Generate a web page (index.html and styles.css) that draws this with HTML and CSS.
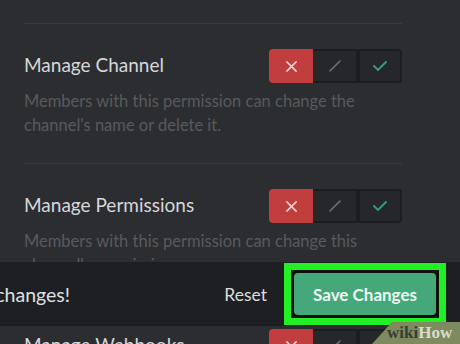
FILE: index.html
```html
<!DOCTYPE html>
<html lang="en">
<head>
  <meta charset="UTF-8">
  <meta name="viewport" content="width=device-width, initial-scale=1.0">
  <title>Channel Permissions</title>
  <link rel="stylesheet" href="styles.css">
</head>
<body>
  <main class="permissions">
    <div class="perm">
      <div class="perm-row">
        <span class="perm-title">Manage Channel</span>
        <div class="toggle">
          <span class="seg seg-deny"><svg viewBox="0 0 14 14"><path d="M2 2L12 12M12 2L2 12"/></svg></span>
          <span class="seg seg-neutral"><svg viewBox="0 0 14 14"><path d="M2 12L12 2"/></svg></span>
          <span class="seg seg-allow"><svg viewBox="0 0 14 14"><path d="M1 7L5 11L13 3"/></svg></span>
        </div>
      </div>
      <p class="perm-desc">Members with this permission can change the channel's name or delete it.</p>
    </div>

    <div class="perm">
      <div class="perm-row">
        <span class="perm-title">Manage Permissions</span>
        <div class="toggle">
          <span class="seg seg-deny"><svg viewBox="0 0 14 14"><path d="M2 2L12 12M12 2L2 12"/></svg></span>
          <span class="seg seg-neutral"><svg viewBox="0 0 14 14"><path d="M2 12L12 2"/></svg></span>
          <span class="seg seg-allow"><svg viewBox="0 0 14 14"><path d="M1 7L5 11L13 3"/></svg></span>
        </div>
      </div>
      <p class="perm-desc">Members with this permission can change this channel's permissions.</p>
    </div>

    <div class="perm">
      <div class="perm-row">
        <span class="perm-title">Manage Webhooks</span>
        <div class="toggle">
          <span class="seg seg-deny"><svg viewBox="0 0 14 14"><path d="M2 2L12 12M12 2L2 12"/></svg></span>
          <span class="seg seg-neutral"><svg viewBox="0 0 14 14"><path d="M2 12L12 2"/></svg></span>
          <span class="seg seg-allow"><svg viewBox="0 0 14 14"><path d="M1 7L5 11L13 3"/></svg></span>
        </div>
      </div>
      <p class="perm-desc">Members with this permission can create, edit and delete webhooks.</p>
    </div>
  </main>

  <div class="notice">
    <div class="notice-msg"><span>Careful — you have unsaved changes!</span></div>
    <button type="button" class="btn-reset">Reset</button>
    <div class="highlight">
      <button type="button" class="btn-save">Save Changes</button>
    </div>
  </div>

  <div class="watermark"><span class="wm-wiki">wiki</span><span class="wm-how">How</span></div>
</body>
</html>
```

FILE: styles.css
```css
body {
  margin: 0;
  width: 460px;
  height: 344px;
  overflow: hidden;
  position: relative;
  background-color: #2c2d31;
  font-family: Lato, "Open Sans", sans-serif;
}
.permissions {
  padding: 23px 58px 0 24px;
}
.perm {
  border-top: 1px solid #393a3f;
  padding-top: 25px;
  padding-bottom: 26px;
}
.perm-row {
  display: flex;
  align-items: center;
  justify-content: space-between;
}
.perm-title {
  color: #d6d7d9;
  font-size: 19px;
  margin-top: -4px;
}
.perm-desc {
  margin: 6px 0 0;
  color: #585a5e;
  font-size: 16.5px;
  line-height: 24px;
  width: 350px;
}
.toggle {
  display: flex;
  height: 34px;
  border-radius: 4px;
  background-color: #26272b;
}
.seg {
  width: 44px;
  display: flex;
  align-items: center;
  justify-content: center;
  box-sizing: border-box;
  border: 2px solid #1c1d20;
}
.seg svg {
  width: 14px;
  height: 14px;
  fill: none;
  stroke-width: 1.6;
  stroke-linecap: round;
}
.seg-deny {
  background-color: #c23d3d;
  border-color: #c23d3d;
  border-radius: 4px 0 0 4px;
}
.seg-deny svg {
  stroke: #f3d6d6;
  width: 13px;
  height: 13px;
}
.seg-neutral {
  width: 45px;
  border-left: none;
}
.seg-neutral svg {
  stroke: #6e7074;
}
.seg-allow {
  border-left-width: 2px;
  border-radius: 0 4px 4px 0;
}
.seg-allow svg {
  stroke: #3b9e7c;
  stroke-width: 1.8;
}
.notice {
  position: absolute;
  left: 0;
  right: 0;
  top: 262px;
  height: 64px;
  display: flex;
  align-items: center;
  padding-right: 14px;
  background-color: #1e1f22;
}
.notice-msg {
  flex: 0 0 70px;
  display: flex;
  justify-content: flex-end;
  overflow: hidden;
  white-space: nowrap;
  color: #dfe0e2;
  font-size: 19.5px;
}
.btn-reset {
  margin-left: auto;
  margin-right: 17px;
  background: none;
  border: none;
  padding: 0;
  color: #dcdddf;
  font-family: Lato, sans-serif;
  font-size: 17.5px;
}
.highlight {
  border: 7px solid #22f024;
  padding: 3px;
  background-color: #0e100e;
  display: flex;
}
.btn-save {
  width: 142px;
  height: 42px;
  border: none;
  border-radius: 4px;
  background-color: #45a87b;
  color: #eef7f1;
  font-family: Lato, sans-serif;
  font-size: 17px;
  font-weight: 700;
}
.watermark {
  position: absolute;
  right: 0;
  bottom: 0;
  width: 88px;
  height: 22px;
  padding-left: 15px;
  box-sizing: border-box;
  background-color: #7e8b5f;
  clip-path: polygon(20px 0, 100% 0, 100% 100%, 0 100%);
  font-family: "Liberation Serif", serif;
  font-weight: 700;
  font-size: 17px;
  line-height: 21px;
}
.wm-wiki {
  color: #3b3d33;
}
.wm-how {
  color: #d9ddcb;
}
```
